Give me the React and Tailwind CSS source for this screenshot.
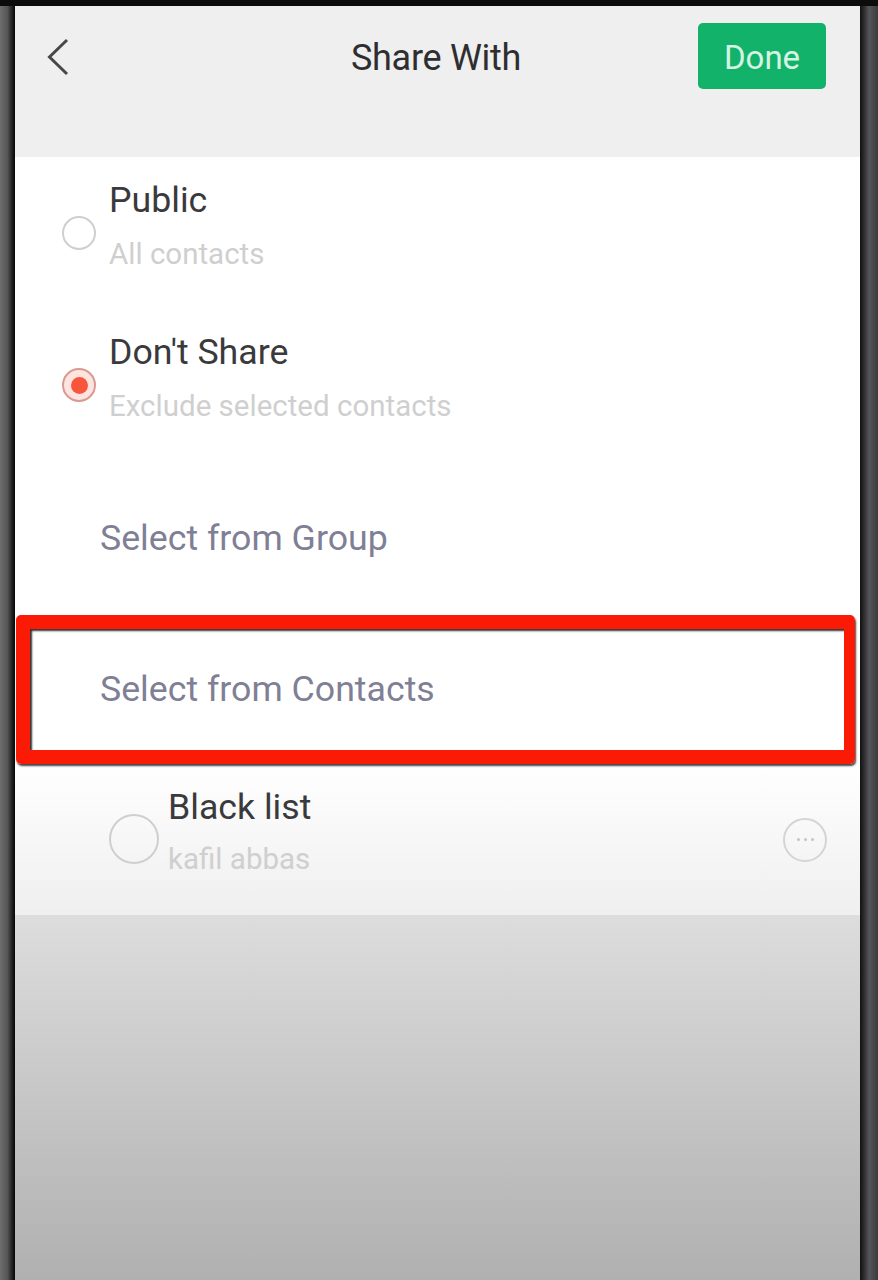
const font = { fontFamily: "Roboto, 'Liberation Sans', sans-serif" };

function OptionRow({ title, sub, selected }) {
  return (
    <div className="flex h-[152px] items-center pl-[47px]">
      {selected ? (
        <div className="flex h-[34px] w-[34px] items-center justify-center rounded-full border-[2px] border-[#d89a93] bg-[#fde4df]">
          <div className="h-[17px] w-[17px] rounded-full bg-[#f8563c]" />
        </div>
      ) : (
        <div className="h-[34px] w-[34px] rounded-full border-[2px] border-[#cfcfcf]" />
      )}
      <div className="ml-[13px] flex flex-col pb-[15px]">
        <div className="text-[35.7px] leading-[40px] text-[#3a3a3c]">{title}</div>
        <div className="mt-[16px] text-[29.5px] leading-[36px] text-[#cfcfcf]">{sub}</div>
      </div>
    </div>
  );
}

export default function App() {
  return (
    <div style={font} className="flex h-[1280px] w-[878px] flex-col overflow-hidden bg-black">
      <div className="h-[6px] bg-[#0c0c0c]" />
      <div className="flex flex-1">
        <div className="w-[15px] bg-gradient-to-r from-[#6e6e6e] via-[#555555] to-[#060606]" />
        <main className="flex flex-1 flex-col">
          <header className="flex h-[151px] items-start bg-[#efefef] pl-[31px] pr-[34px]">
            <div className="flex-1">
              <svg width="24" height="38" viewBox="0 0 24 38" className="mt-[32px]" fill="none" stroke="#48484a" strokeWidth="3">
                <path d="M21 2 L3.5 19 L21 36" />
              </svg>
            </div>
            <h1 className="mt-[30px] text-[36px] font-normal leading-[44px] tracking-[-0.3px] text-[#2e2e30]">Share With</h1>
            <div className="flex flex-1 justify-end">
              <button className="mt-[17px] h-[66px] w-[128px] rounded-[5px] bg-[#12b26b] pt-[4px] text-[33px] text-[#d5f3e2]">Done</button>
            </div>
          </header>
          <section className="flex h-[758px] flex-col bg-gradient-to-b from-white from-[80%] to-[#efefef]">
            <OptionRow title="Public" sub="All contacts" />
            <OptionRow title="Don't Share" sub="Exclude selected contacts" selected />
            <div className="flex h-[152px] items-center pl-[85px] pt-[3px] text-[35.7px] text-[#7f7f96]">Select from Group</div>
            <div className="ml-[1px] mr-[5px] mt-[2px] flex h-[149px] items-center rounded-[5px] border-[14px] border-r-[11px] border-[#fb1a05] pl-[70px] text-[35.7px] text-[#7f7f96] shadow-[inset_2px_2px_2px_#333,1px_2px_2px_#444]">
              Select from Contacts
            </div>
            <div className="flex flex-1 items-center pl-[94px] pr-[33px]">
              <div className="mb-[2px] h-[50px] w-[50px] rounded-full border-[2px] border-[#cfcfcf]" />
              <div className="ml-[9px] flex flex-col pb-[15px]">
                <div className="text-[35.7px] leading-[40px] text-[#3a3a3c]">Black list</div>
                <div className="mt-[14px] text-[29.5px] leading-[36px] text-[#cfcfcf]">kafil abbas</div>
              </div>
              <div className="ml-auto flex h-[44px] w-[44px] items-center justify-center gap-[4px] rounded-full border-[2px] border-[#d4d4d4]">
                <span className="h-[3px] w-[3px] rounded-full bg-[#c4c4c4]" />
                <span className="h-[3px] w-[3px] rounded-full bg-[#c4c4c4]" />
                <span className="h-[3px] w-[3px] rounded-full bg-[#c4c4c4]" />
              </div>
            </div>
          </section>
          <div className="flex-1 bg-gradient-to-b from-[#dddddd] to-[#b0b0b0]" />
        </main>
        <div className="w-[18px] bg-gradient-to-r from-[#111111] via-[#55555a] to-[#3c3c3f]" />
      </div>
    </div>
  );
}
